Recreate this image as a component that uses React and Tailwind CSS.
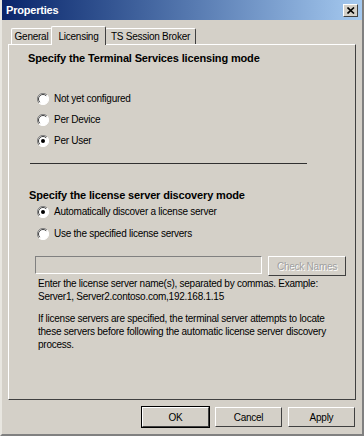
import React from 'react'

function Radio({ checked }) {
  return (
    <svg width="12" height="12" viewBox="0 0 12 12" className="shrink-0">
      <circle cx="6" cy="6" r="5.5" fill="#ffffff" />
      <path d="M10 2 A5.5 5.5 0 0 0 2 10" fill="none" stroke="#808080" strokeWidth="1" />
      <path d="M9.2 2.8 A4.5 4.5 0 0 0 2.8 9.2" fill="none" stroke="#404040" strokeWidth="1" />
      <path d="M2 10 A5.5 5.5 0 0 0 10 2" fill="none" stroke="#ffffff" strokeWidth="1" />
      {checked && <circle cx="6" cy="6" r="2" fill="#000000" />}
    </svg>
  )
}

function Option({ checked, label, className }) {
  return (
    <div className={`flex items-center gap-[5px] h-[13px] ${className}`}>
      <Radio checked={checked} />
      <span>{label}</span>
    </div>
  )
}

function Button({ children, def }) {
  return (
    <button
      className={`w-[67px] h-[20px] bg-[#d4d0c8] border border-t-white border-l-white border-r-[#404040] border-b-[#404040] text-black ${def ? 'outline outline-1 outline-black' : ''}`}
    >
      {children}
    </button>
  )
}

export default function App() {
  return (
    <div
      className="w-[364px] h-[436px] bg-[#d4d0c8] border-2 border-t-0 border-l-[#e8e6e0] border-r-[#808080] border-b-[#808080] text-[10px] tracking-[-0.25px] leading-[13px] text-black flex flex-col overflow-hidden"
      style={{ fontFamily: '"Liberation Sans", Arial, sans-serif' }}
    >
      {/* title bar */}
      <div className="h-[20px] flex items-center justify-between pl-[4px] pr-[4px] bg-gradient-to-r from-[#0a246a] to-[#a6caf0]">
        <span className="text-white font-bold text-[11px] tracking-[-0.2px]">Properties</span>
        <div className="w-[15px] h-[13px] bg-[#d4d0c8] border border-t-white border-l-white border-r-[#404040] border-b-[#404040] flex items-center justify-center">
          <svg width="8" height="7" viewBox="0 0 8 7">
            <path d="M0.5 0.5 L7 6.5 M7 0.5 L0.5 6.5" stroke="#000" strokeWidth="1.6" />
          </svg>
        </div>
      </div>

      {/* tabs */}
      <div className="flex items-end h-[24px] pl-[9px]">
        <div className="w-[41px] h-[16px] flex items-center justify-center border border-b-0 border-t-white border-l-white border-r-[#808080] rounded-t-[2px]">General</div>
        <div className="w-[55px] h-[19px] ml-[-1px] flex items-center justify-center border border-b-0 border-t-white border-l-white border-r-[#404040] rounded-t-[2px] bg-[#d4d0c8] relative top-[1px] z-10">Licensing</div>
        <div className="w-[91px] h-[16px] ml-[-1px] flex items-center justify-center border border-b-0 border-t-white border-l-white border-r-[#404040] rounded-t-[2px]">TS Session Broker</div>
      </div>

      {/* panel */}
      <div className="mx-[6px] h-[356px] border border-t-white border-l-white border-r-[#404040] border-b-[#404040] flex flex-col pl-[19px] pr-[8px]">
        <div className="font-bold text-[11px] tracking-[-0.15px] mt-[7px]">Specify the Terminal Services licensing mode</div>
        <Option label="Not yet configured" className="ml-[9px] mt-[27px]" />
        <Option label="Per Device" className="ml-[9px] mt-[8px]" />
        <Option label="Per User" checked className="ml-[9px] mt-[8px]" />
        <div className="w-[277px] h-[1px] bg-[#303030] ml-[2px] mt-[16px]" />
        <div className="font-bold text-[11px] tracking-[-0.15px] mt-[25px] ml-[1px]">Specify the license server discovery mode</div>
        <Option label="Automatically discover a license server" checked className="ml-[9px] mt-[3px]" />
        <Option label="Use the specified license servers" className="ml-[9px] mt-[9px]" />
        <div className="flex items-start gap-[6px] mt-[16px] ml-[7px]">
          <div className="w-[227px] h-[18px] bg-[#d4d0c8] border border-t-[#808080] border-l-[#808080] border-r-white border-b-white" />
          <button className="w-[78px] h-[20px] bg-[#d4d0c8] text-[#a0a0a0] [text-shadow:1px_1px_0_#ffffff] border border-t-white border-l-white border-r-[#404040] border-b-[#404040]">Check Names</button>
        </div>
        <div className="ml-[10px] mt-[1px] pr-[10px]">
          <div>Enter the license server name(s), separated by commas. Example:</div>
          <div>Server1, Server2.contoso.com,192.168.1.15</div>
          <div className="mt-[9px]">If license servers are specified, the terminal server attempts to locate these servers before following the automatic license server discovery process.</div>
        </div>
      </div>

      {/* buttons */}
      <div className="flex justify-end gap-[6px] pr-[7px] mt-[7px]">
        <Button def>OK</Button>
        <Button>Cancel</Button>
        <Button>Apply</Button>
      </div>
    </div>
  )
}
